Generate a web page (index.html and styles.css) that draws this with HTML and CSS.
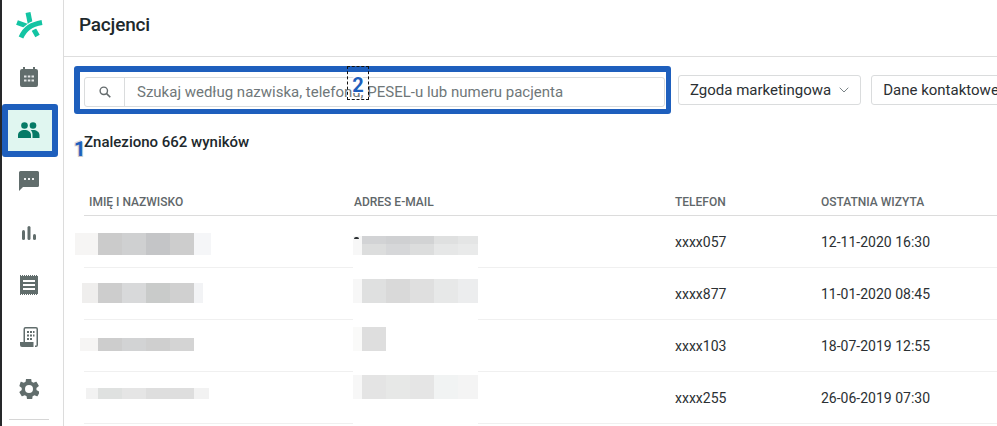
FILE: index.html
```html
<!DOCTYPE html>
<html lang="pl">
<head>
    <meta charset="UTF-8">
    <meta name="viewport" content="width=device-width, initial-scale=1.0">
    <title>Pacjenci</title>
    <link rel="stylesheet" href="styles.css">
</head>
<body>
    <div class="app">
        <nav class="sidebar">
            <div class="nav-logo">
                <svg width="28" height="28" viewBox="0 0 28 28" fill="none" stroke="#13c4a3" stroke-width="5">
                    <path d="M13 .5L15.500 13"/>
                    <path d="M2 10.500L13 14.500"/>
                    <path d="M18 16L22.500 24"/>
                    <path d="M6.500 25C10.500 17 16 13 27 10.500" stroke="#fff" stroke-width="8"/>
                    <path d="M6 25.500C10 16.500 16 12.500 27 10.500"/>
                </svg>
            </div>
            <div class="nav-item">
                <svg width="18" height="20" viewBox="0 0 18 20"><path d="M3 0h2v2h8V0h2v2h1a2 2 0 0 1 2 2v14a2 2 0 0 1-2 2H2a2 2 0 0 1-2-2V4a2 2 0 0 1 2-2h1z" fill="#616d6c"/><path d="M4 8.500h2.500v2H4zM7.800 8.500h2.500v2H7.800zM11.500 8.500H14v2h-2.500zM4 12.500h2.500v2H4zM7.800 12.500h2.500v2H7.800zM11.500 12.500H14v2h-2.500z" fill="#e3e6e6"/></svg>
            </div>
            <div class="nav-item active">
                <svg width="22" height="16" viewBox="0 0 22 16"><circle cx="6.500" cy="3.500" r="3.300" fill="#067a66"/><circle cx="15" cy="3.500" r="3.300" fill="#067a66"/><path d="M0 16v-3c0-3 3-5 6.500-5s6.500 2 6.500 5v3z" fill="#067a66"/><path d="M14.500 16v-3.500c0-1.800-.7-3.200-1.800-4.200.7-.2 1.500-.3 2.300-.3 3.500 0 6.500 2 6.500 5v3z" fill="#067a66"/></svg>
            </div>
            <div class="nav-item nav-after-active">
                <svg width="20" height="20" viewBox="0 0 20 20"><path d="M1.500 0h17A1.500 1.500 0 0 1 20 1.500v13a1.500 1.500 0 0 1-1.500 1.500H4l-4 4V1.500A1.500 1.500 0 0 1 1.500 0z" fill="#616d6c"/><path d="M5 7h2v2H5zM9 7h2v2H9zM13 7h2v2h-2z" fill="#eef0f0"/></svg>
            </div>
            <div class="nav-item">
                <svg width="14" height="14" viewBox="0 0 14 14"><rect x="0" y="4" width="3" height="10" rx="1.500" fill="#616d6c"/><rect x="5.500" y="0" width="3" height="14" rx="1.500" fill="#616d6c"/><rect x="11" y="8" width="3" height="6" rx="1.500" fill="#616d6c"/></svg>
            </div>
            <div class="nav-item">
                <svg width="18" height="20" viewBox="0 0 18 20"><path d="M0 1h18v18H0z" fill="#616d6c"/><path d="M0 .5h18M0 19.500h18" stroke="#616d6c" stroke-dasharray="1 1" fill="none"/><path d="M3 5h12v2H3zM3 9h12v2H3zM3 13h12v2H3z" fill="#fff"/></svg>
            </div>
            <div class="nav-item">
                <svg width="18" height="20" viewBox="0 0 18 20"><path d="M5.500 0h10.500A2 2 0 0 1 18 2v16a2 2 0 0 1-2 2h-1v-1.500h1.500V2q0-.5-.5-.5H5.500q-.5 0-.5.5v13.500H3.500V2a2 2 0 0 1 2-2z" fill="#616d6c"/><path d="M0 15h13.500v5H2a2 2 0 0 1-2-2z" fill="#616d6c"/><path d="M7 4h2v2H7zM10 4h2v2h-2zM13 4h1.500v2H13zM7 7.500h2v2H7zM10 7.500h2v2h-2zM13 7.500h1.500v2H13zM7 11h2v2H7zM10 11h2v2h-2z" fill="#616d6c"/></svg>
            </div>
            <div class="nav-item">
                <svg width="20" height="20" viewBox="2 2 20 20"><path d="M19.400 13c.1-.3.100-.7.100-1s0-.7-.1-1l2.200-1.700c.2-.2.300-.4.100-.7l-2.100-3.600c-.1-.2-.4-.3-.6-.2l-2.600 1c-.5-.4-1.100-.8-1.800-1l-.4-2.800c0-.2-.2-.4-.5-.4H9.500c-.3 0-.5.200-.5.400l-.4 2.800c-.6.200-1.200.6-1.800 1l-2.600-1c-.2-.1-.5 0-.6.200L2.500 8.600c-.1.300-.1.500.1.700L4.800 11c-.1.300-.1.700-.1 1s0 .7.1 1l-2.200 1.700c-.2.200-.3.400-.1.700l2.100 3.600c.1.200.4.300.6.200l2.600-1c.6.400 1.200.8 1.800 1l.4 2.800c0 .2.200.4.500.4h4.200c.3 0 .5-.2.500-.4l.4-2.800c.7-.2 1.300-.6 1.800-1l2.600 1c.2.100.5 0 .6-.2l2.100-3.600c.2-.3.100-.5-.1-.7zM12 16a4 4 0 1 1 0-8 4 4 0 0 1 0 8z" fill="#616d6c"/></svg>
            </div>
            <div class="nav-divider"></div>
        </nav>

        <main class="content">
            <header class="page-header">
                <h1 class="page-title">Pacjenci</h1>
            </header>

            <div class="filters">
                <div class="search-frame">
                    <div class="search-box">
                        <span class="search-addon">
                            <svg width="12" height="12" viewBox="0 0 12 12"><circle cx="4.800" cy="4.800" r="3.700" fill="none" stroke="#646b6d" stroke-width="1.400"/><path d="M7.600 7.600l3.700 3.700" stroke="#646b6d" stroke-width="1.600"/></svg>
                        </span>
                        <span class="search-placeholder">Szukaj według nazwiska, telefonu, PESEL-u lub numeru pacjenta</span>
                    </div>
                    <span class="marker marker-two">2</span>
                </div>
                <div class="filter-btn">Zgoda marketingowa
                    <svg width="10" height="6" viewBox="0 0 10 6"><path d="M.7.700L5 5 9.300.7" fill="none" stroke="#7b8487" stroke-width="1"/></svg>
                </div>
                <div class="filter-btn">Dane kontaktowe</div>
            </div>

            <div class="results">
                <span class="marker marker-one">1</span>
                Znaleziono 662 wyników
            </div>

            <div class="table">
                <div class="table-row table-head">
                    <div>IMIĘ I NAZWISKO</div>
                    <div>ADRES E-MAIL</div>
                    <div>TELEFON</div>
                    <div>OSTATNIA WIZYTA</div>
                </div>

                <div class="table-row">
                    <div class="cell-blur">
                        <div class="blur-name b-row1">
                            <i class="px-side" style="width:23px;background:#f6f5f4"></i><i style="background:#cbcbcb"></i><i style="background:#cfd0d1"></i><i style="background:#c4c5c7"></i><i style="background:#cdcdcd"></i><i class="px-side" style="width:17px;background:#f5f6f8"></i>
                        </div>
                    </div>
                    <div class="cell-blur">
                        <div class="blur-mail">
                            <span class="mail-speck"></span>
                            <div class="mail-row mail-row-1">
                                <i class="px-start"></i><i style="background:linear-gradient(#d2d3d5 40%, #dcdddd 40%)"></i><i style="background:linear-gradient(#cfd0d2 40%, #d6d7d9 40%)"></i><i style="background:linear-gradient(#d2d3d4 40%, #dcdddd 40%)"></i><i style="background:linear-gradient(#dfe0e0 40%, #e6e7e7 40%)"></i><i class="px-end" style="background:linear-gradient(#e4e5e5 40%, #e9eaea 40%)"></i>
                            </div>
                        </div>
                    </div>
                    <div>xxxx057</div>
                    <div>12-11-2020 16:30</div>
                </div>

                <div class="table-row">
                    <div class="cell-blur">
                        <div class="blur-name b-row2">
                            <i class="px-side" style="width:16px;background:#efeeed"></i><i style="background:#cdcdcd"></i><i style="background:#d8d9da"></i><i style="background:#c9cbca"></i><i style="background:#d0d0d0"></i><i class="px-side" style="width:9px;background:#f2f3f5"></i>
                        </div>
                    </div>
                    <div class="cell-blur">
                        <div class="blur-mail">
                            <div class="mail-row mail-row-2">
                                <i class="px-start"></i><i style="background:#dfe0e0"></i><i style="background:#d9d9d9"></i><i style="background:#dfdfdf"></i><i style="background:#e7e8e8"></i><i class="px-end" style="background:#ecedee"></i>
                            </div>
                        </div>
                    </div>
                    <div>xxxx877</div>
                    <div>11-01-2020 08:45</div>
                </div>

                <div class="table-row">
                    <div class="cell-blur">
                        <div class="blur-name b-row3">
                            <i class="px-side" style="width:18px;background:#f6f5f4"></i><i style="background:#cdcdcd"></i><i style="background:#d2d3d4"></i><i style="background:#cfcfcf"></i><i style="background:#d4d4d4"></i>
                        </div>
                    </div>
                    <div class="cell-blur">
                        <div class="blur-mail">
                            <div class="mail-row mail-row-3">
                                <i class="px-start" style="background:#fafaf9"></i><i style="background:#dedede"></i>
                            </div>
                        </div>
                    </div>
                    <div>xxxx103</div>
                    <div>18-07-2019 12:55</div>
                </div>

                <div class="table-row">
                    <div class="cell-blur">
                        <div class="blur-name b-row4">
                            <i class="px-side" style="width:12px;background:#f2f2f2"></i><i style="background:#dfe1e0"></i><i style="background:#e5e5e5"></i><i style="background:#dedede"></i><i style="background:#dedede"></i><i class="px-side" style="width:15px;background:#f2f2f2"></i>
                        </div>
                    </div>
                    <div class="cell-blur">
                        <div class="blur-mail">
                            <div class="mail-row mail-row-4">
                                <i class="px-start"></i><i style="background:#e4e4e4"></i><i style="background:#e7e8e7"></i><i style="background:#e5e5e5"></i><i style="background:#f1f3f3"></i><i class="px-end" style="background:#f4f4f4"></i>
                            </div>
                        </div>
                    </div>
                    <div>xxxx255</div>
                    <div>26-06-2019 07:30</div>
                </div>
            </div>
        </main>
    </div>
</body>
</html>
```

FILE: styles.css
```css
* {
    box-sizing: border-box;
}

body {
    margin: 0;
    background: #fff;
    color: #2b3033;
    font-family: Roboto, "Liberation Sans", sans-serif;
    overflow: hidden;
}

.app {
    display: flex;
    height: 426px;
    width: 997px;
    overflow: hidden;
}

/* pasek boczny */
.sidebar {
    flex: 0 0 64px;
    display: flex;
    flex-direction: column;
    align-items: flex-start;
    border-left: 2px solid #26282a;
    border-right: 1px solid #dcdcdc;
}

.nav-logo {
    width: 56px;
    height: 51px;
    padding-right: 2px;
    display: flex;
    align-items: center;
    justify-content: center;
    flex: none;
}

.nav-item {
    width: 56px;
    height: 52px;
    padding-right: 2px;
    flex: none;
    display: flex;
    align-items: center;
    justify-content: center;
}

.nav-item.active {
    height: 53px;
    margin-top: 1px;
    padding-bottom: 2px;
    background: #e0f6f0;
    border: 6px solid #1e5fbd;
    border-radius: 3px;
}

.nav-item.nav-after-active {
    margin-top: -2px;
}

.nav-divider {
    width: 40px;
    height: 1px;
    margin: 4px 0 0 7px;
    background: #d6d6d6;
}

/* tresc */
.content {
    flex: 1;
    min-width: 0;
}

.page-header {
    height: 57px;
    padding: 14px 0 0 15px;
    border-bottom: 1px solid #dedede;
}

.page-title {
    margin: 0;
    font-size: 19px;
    line-height: 22px;
    font-weight: 500;
    color: #20282c;
    letter-spacing: -0.2px;
}

.filters {
    display: flex;
    align-items: center;
    gap: 10px;
    padding: 9px 0 0 10px;
    white-space: nowrap;
}

.search-frame {
    position: relative;
    flex: none;
    display: flex;
    width: 597px;
    height: 48px;
    margin-right: -3px;
    padding: 5px 0 0 4px;
    border: 5px solid #1e5fbd;
    border-top-width: 6px;
    border-left-width: 6px;
    border-radius: 3px;
}

.search-box {
    display: flex;
    width: 581px;
    height: 30px;
    border: 1px solid #dadcdd;
    border-radius: 3px;
    background: #fff;
}

.search-addon {
    flex: 0 0 40px;
    display: flex;
    align-items: center;
    justify-content: center;
    border-right: 1px solid #dadcdd;
}

.search-placeholder {
    padding-left: 12px;
    font-size: 15px;
    line-height: 28px;
    color: #6f7779;
}

.filter-btn {
    flex: none;
    height: 30px;
    padding: 0 11px;
    display: flex;
    align-items: center;
    gap: 8px;
    border: 1px solid #dadcdd;
    border-radius: 3px;
    font-size: 15px;
    color: #2b3033;
}

.results {
    position: relative;
    margin: 20px 0 0 20px;
    font-size: 15px;
    line-height: 17px;
    font-weight: 500;
    color: #20282c;
}

/* numerki z adnotacji */
.marker {
    position: absolute;
    color: #1e5fbd;
    font-weight: 700;
    text-align: center;
    text-shadow: 1px 1px 0 #fff, -1px -1px 0 #fff, 1px -1px 0 #fff, -1px 1px 0 #fff;
}

.marker-one {
    left: -10px;
    top: 6px;
    width: 10px;
    font-size: 20px;
    line-height: 19px;
    text-shadow: 1px 1px 0 #ccc, -1px 1px 0 #ccc, -1px -1px 0 #ddd;
}

.marker-two {
    left: 267px;
    top: -6px;
    width: 22px;
    height: 34px;
    font-size: 20px;
    line-height: 37px;
    border: 1px dashed #111;
}

/* tabela */
.table {
    margin: 34px 0 0 20px;
    font-size: 14px;
    color: #2b3033;
}

.table-row {
    display: grid;
    grid-template-columns: 265px 321px 146px 1fr;
    height: 52px;
    align-items: center;
    padding-left: 5px;
    border-bottom: 1px solid #f0f0f0;
    white-space: nowrap;
}

.table-head {
    height: 31px;
    padding-top: 3px;
    border-bottom: 1px solid #dcdcdc;
    font-size: 12px;
    font-weight: 500;
    color: #5f676a;
}

.cell-blur {
    height: 52px;
    align-self: start;
    position: relative;
}

.blur-name {
    position: absolute;
    display: flex;
}

.b-row1 { left: -14px; top: 17px; height: 22px; }
.b-row2 { left: -7px; top: 15px; height: 20px; }
.b-row3 { left: -9px; top: 18px; height: 13px; }
.b-row4 { left: -3px; top: 16px; height: 11px; }

.blur-name i {
    display: block;
    width: 24px;
    flex: none;
}

/* biala latka zakrywa tez linie wiersza */
.blur-mail {
    position: absolute;
    left: -1px;
    top: 0;
    width: 125px;
    height: 53px;
    background: #fff;
    z-index: 1;
}

.mail-row {
    position: absolute;
    display: flex;
    left: 0;
}

.mail-row-1 { top: 20px; height: 19px; }
.mail-row-2 { top: 11px; height: 24px; }
.mail-row-3 { top: 7px; height: 24px; }
.mail-row-4 { top: 3px; height: 24px; }

.mail-row i {
    display: block;
    width: 24px;
    flex: none;
}

.mail-row .px-start {
    width: 9px;
    background: #f7f7f7;
}

.mail-row .px-end {
    width: 20px;
}

.mail-speck {
    position: absolute;
    left: 1px;
    top: 21px;
    width: 5px;
    height: 2px;
    z-index: 2;
    background: #2b3033;
    border-radius: 2px 2px 0 0;
}
```
